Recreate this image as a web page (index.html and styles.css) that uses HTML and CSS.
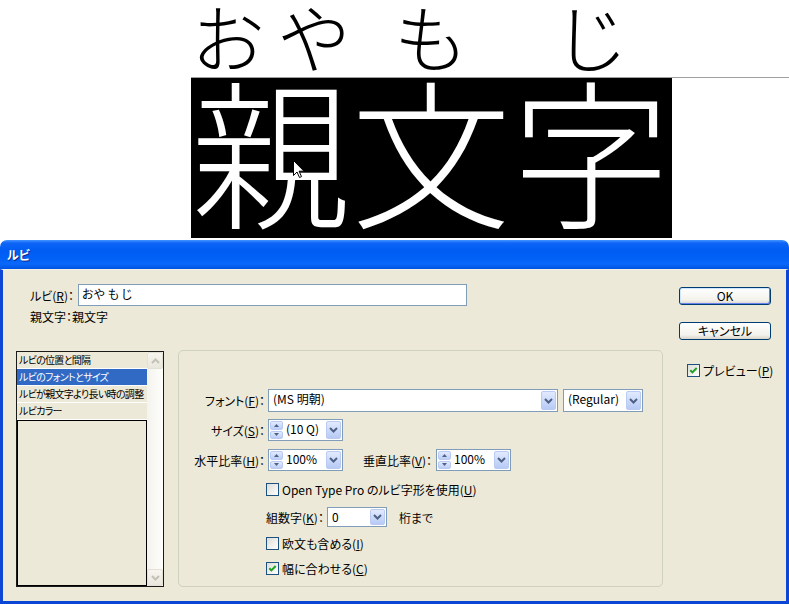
FILE: index.html
```html
<!DOCTYPE html>
<html lang="ja">
<head>
<meta charset="utf-8">
<title>ルビ</title>
<link rel="stylesheet" href="styles.css">
</head>
<body>
<div class="stage">
  <div class="ruby-line">
    <div class="rb-group pair"><span>お</span><span>や</span></div>
    <div class="rb-group"><span>も</span></div>
    <div class="rb-group"><span>じ</span></div>
  </div>
  <div class="rule">
    <div class="base-box">
      <span class="kanji">親</span><span class="kanji">文</span><span class="kanji">字</span>
      <svg class="cursor" width="12" height="19" viewBox="0 0 12 19"><path d="M0.5 0.5 L0.5 15.5 L4 12 L6.5 17.5 L8.5 16.6 L6.1 11.2 L11 11.2 Z" fill="#fff" stroke="#000" stroke-width="1"/></svg>
    </div>
  </div>
</div>

<div class="dialog">
  <div class="titlebar"><span class="title">ルビ</span></div>
  <div class="client">
    <div class="main">
      <div class="fields">
        <div class="field-row">
          <span class="lbl">ルビ(<u>R</u>)：</span>
          <div class="textbox">おや も じ</div>
        </div>
        <div class="info-row">親文字：親文字</div>
      </div>

      <div class="panels">
        <div class="listbox">
          <div class="list-items">
            <div class="item">ルビの位置と間隔</div>
            <div class="item selected">ルビのフォントとサイズ</div>
            <div class="item">ルビが親文字より長い時の調整</div>
            <div class="item">ルビカラー</div>
            <div class="list-empty"></div>
          </div>
          <div class="scrollbar">
            <div class="sb-btn"><svg width="9" height="6" viewBox="0 0 9 6"><path d="M1 5 L4.5 1.5 L8 5" fill="none" stroke="#C4C2B6" stroke-width="2"/></svg></div>
            <div class="sb-track"></div>
            <div class="sb-btn"><svg width="9" height="6" viewBox="0 0 9 6"><path d="M1 1 L4.5 4.5 L8 1" fill="none" stroke="#C4C2B6" stroke-width="2"/></svg></div>
          </div>
        </div>

        <div class="group">
          <div class="grow">
            <span class="glabel">フォント(<u>F</u>)：</span>
            <div class="combo font-combo">
              <span class="ctext">(MS 明朝)</span>
              <span class="dd"><svg width="9" height="6" viewBox="0 0 9 6"><path d="M1 1 L4.5 4.5 L8 1" fill="none" stroke="#4D6185" stroke-width="2"/></svg></span>
            </div>
            <div class="combo style-combo">
              <span class="ctext">(Regular)</span>
              <span class="dd"><svg width="9" height="6" viewBox="0 0 9 6"><path d="M1 1 L4.5 4.5 L8 1" fill="none" stroke="#4D6185" stroke-width="2"/></svg></span>
            </div>
          </div>

          <div class="grow row-size">
            <span class="glabel">サイズ(<u>S</u>)：</span>
            <div class="combo spin-combo">
              <span class="spin">
                <span class="sp"><svg width="5" height="3" viewBox="0 0 5 3"><path d="M0 3 L2.5 0 L5 3 Z" fill="#4D6185"/></svg></span>
                <span class="sp"><svg width="5" height="3" viewBox="0 0 5 3"><path d="M0 0 L2.5 3 L5 0 Z" fill="#4D6185"/></svg></span>
              </span>
              <span class="ctext">(10 Q)</span>
              <span class="dd"><svg width="9" height="6" viewBox="0 0 9 6"><path d="M1 1 L4.5 4.5 L8 1" fill="none" stroke="#4D6185" stroke-width="2"/></svg></span>
            </div>
          </div>

          <div class="grow row-ratio">
            <span class="glabel">水平比率(<u>H</u>)：</span>
            <div class="combo spin-combo">
              <span class="spin">
                <span class="sp"><svg width="5" height="3" viewBox="0 0 5 3"><path d="M0 3 L2.5 0 L5 3 Z" fill="#4D6185"/></svg></span>
                <span class="sp"><svg width="5" height="3" viewBox="0 0 5 3"><path d="M0 0 L2.5 3 L5 0 Z" fill="#4D6185"/></svg></span>
              </span>
              <span class="ctext">100%</span>
              <span class="dd"><svg width="9" height="6" viewBox="0 0 9 6"><path d="M1 1 L4.5 4.5 L8 1" fill="none" stroke="#4D6185" stroke-width="2"/></svg></span>
            </div>
            <span class="glabel2">垂直比率(<u>V</u>)：</span>
            <div class="combo spin-combo">
              <span class="spin">
                <span class="sp"><svg width="5" height="3" viewBox="0 0 5 3"><path d="M0 3 L2.5 0 L5 3 Z" fill="#4D6185"/></svg></span>
                <span class="sp"><svg width="5" height="3" viewBox="0 0 5 3"><path d="M0 0 L2.5 3 L5 0 Z" fill="#4D6185"/></svg></span>
              </span>
              <span class="ctext">100%</span>
              <span class="dd"><svg width="9" height="6" viewBox="0 0 9 6"><path d="M1 1 L4.5 4.5 L8 1" fill="none" stroke="#4D6185" stroke-width="2"/></svg></span>
            </div>
          </div>

          <div class="check row-ot"><span class="cb"></span>Open Type Pro のルビ字形を使用(<u>U</u>)</div>

          <div class="grow row-num">
            <span>組数字(<u>K</u>)：</span>
            <div class="combo num-combo">
              <span class="ctext">0</span>
              <span class="dd"><svg width="9" height="6" viewBox="0 0 9 6"><path d="M1 1 L4.5 4.5 L8 1" fill="none" stroke="#4D6185" stroke-width="2"/></svg></span>
            </div>
            <span class="suffix">桁まで</span>
          </div>

          <div class="check row-latin"><span class="cb"></span>欧文も含める(<u>I</u>)</div>
          <div class="check row-fit"><span class="cb"><svg width="11" height="11" viewBox="0 0 11 11"><path d="M2.3 5.2 L4.4 7.4 L8.7 3" fill="none" stroke="#21A121" stroke-width="2"/></svg></span>幅に合わせる(<u>C</u>)</div>
        </div>
      </div>
    </div>

    <div class="side">
      <button class="btn default">OK</button>
      <button class="btn cancel">キャンセル</button>
      <div class="check preview"><span class="cb"><svg width="11" height="11" viewBox="0 0 11 11"><path d="M2.3 5.2 L4.4 7.4 L8.7 3" fill="none" stroke="#21A121" stroke-width="2"/></svg></span>プレビュー(<u>P</u>)</div>
    </div>
  </div>
</div>
</body>
</html>
```

FILE: styles.css
```css
* { box-sizing: border-box; }
html, body { margin: 0; padding: 0; }
body {
  width: 789px;
  height: 604px;
  overflow: hidden;
  background: #fff;
  font-family: "Noto Sans CJK JP", sans-serif;
  color: #000;
}

/* ---------- top preview area ---------- */
.stage { height: 240px; }
.ruby-line {
  margin-left: 191px;
  width: 481px;
  height: 77px;
  display: flex;
  font-size: 74px;
  line-height: 70px;
  font-weight: 300;
}
.rb-group {
  width: 160px;
  display: flex;
  justify-content: center;
}
.rb-group.pair { gap: 12px; }

.rule {
  margin-left: 191px;
  border-top: 1px solid #a0a0a0;
  height: 161px;
}
.base-box {
  position: relative;
  width: 481px;
  height: 160px;
  background: #000;
  display: flex;
  align-items: flex-start;
}
.kanji {
  width: 160px;
  text-align: center;
  color: #fff;
  font-size: 160px;
  line-height: 138px;
  font-weight: 300;
}
.cursor {
  position: absolute;
  left: 102px;
  top: 82px;
}

/* ---------- dialog ---------- */
.dialog {
  height: 364px;
  display: flex;
  flex-direction: column;
  font-size: 12px;
  font-feature-settings: "palt";
}
.titlebar {
  height: 29px;
  border-radius: 7px 7px 0 0;
  background: linear-gradient(to bottom, #4595FF 0, #0E66F8 3px, #005CF2 10px, #0060F6 18px, #0A68FA 24px, #0052E0 29px);
  display: flex;
  align-items: center;
  padding-left: 7px;
}
.title {
  color: #fff;
  font-weight: bold;
  font-size: 12px;
  text-shadow: 1px 1px 0 #0A2C8C;
}
.client {
  flex: 1;
  display: flex;
  background: #ECE9D8;
  border: 3px solid #0B47D4;
  border-top: 1px solid #F4F2E8;
  padding: 14px 0 0 13px;
}
.main { width: 647px; }

.fields { padding-left: 14px; }
.field-row {
  display: flex;
  align-items: center;
  height: 22px;
}
.lbl { width: 48px; white-space: nowrap; }
.textbox {
  width: 389px;
  height: 22px;
  border: 1px solid #7F9DB9;
  background: #fff;
  padding-left: 3px;
  line-height: 17px;
}
.info-row {
  margin-top: 3px;
  height: 16px;
  line-height: 16px;
}

.panels {
  margin-top: 25px;
  display: flex;
  gap: 14px;
  align-items: flex-start;
}

/* list */
.listbox {
  margin-top: 1px;
  width: 148px;
  height: 236px;
  border: 1px solid #1a1a1a;
  display: flex;
  background: #fff;
}
.list-items {
  width: 130px;
  display: flex;
  flex-direction: column;
}
.item {
  height: 17px;
  border-bottom: 1px solid #fff;
  background: #ECE9D8;
  font-size: 10px;
  letter-spacing: -0.7px;
  line-height: 16px;
  padding-left: 2px;
  white-space: nowrap;
  overflow: hidden;
}
.item.selected { background: #316AC5; color: #fff; }
.list-empty {
  flex: 1;
  border: 1px solid #000;
  background: #ECE9D8;
}
.scrollbar {
  width: 16px;
  display: flex;
  flex-direction: column;
  background: linear-gradient(to right, #F4F3EE, #FEFEFB);
}
.sb-btn {
  height: 17px;
  border: 1px solid #E3E1D6;
  border-radius: 2px;
  background: linear-gradient(#F6F5EF, #E9E7DD);
  display: flex;
  align-items: center;
  justify-content: center;
}
.sb-track { flex: 1; }

/* group */
.group {
  width: 485px;
  height: 237px;
  border: 1px solid #D0D0BF;
  border-radius: 5px;
  padding-top: 38px;
}
.grow {
  display: flex;
  align-items: center;
}
.glabel {
  width: 89px;
  padding-right: 3px;
  text-align: right;
  white-space: nowrap;
}
.glabel2 {
  width: 93px;
  padding-right: 4px;
  text-align: right;
  white-space: nowrap;
}
.combo {
  display: flex;
  border: 1px solid #7F9DB9;
  background: #fff;
  padding: 1px;
}
.ctext {
  flex: 1;
  padding-left: 3px;
  line-height: 15px;
  white-space: nowrap;
}
.dd {
  width: 15px;
  border: 1px solid #B9CBF3;
  border-radius: 2px;
  background: linear-gradient(#E2EAFE, #B7CAF5);
  display: flex;
  align-items: center;
  justify-content: center;
}
.font-combo { width: 290px; height: 23px; }
.style-combo { width: 80px; height: 23px; margin-left: 5px; }
.spin-combo { width: 75px; height: 22px; }
.spin {
  width: 13px;
  display: flex;
  flex-direction: column;
  gap: 1px;
}
.sp {
  flex: 1;
  border: 1px solid #B9CBF3;
  border-radius: 2px;
  background: linear-gradient(#E2EAFE, #BCCDF6);
  display: flex;
  align-items: center;
  justify-content: center;
}
.row-size { margin-top: 7px; }
.row-ratio { margin-top: 8px; }

.check {
  display: flex;
  align-items: center;
  height: 16px;
  white-space: nowrap;
}
.cb {
  width: 13px;
  height: 13px;
  border: 1px solid #1C5180;
  background: linear-gradient(135deg, #DCDCD7, #FFFFFF);
  margin-right: 3px;
  display: flex;
  flex-shrink: 0;
}
.row-ot { margin: 10px 0 0 87px; }
.row-num { margin: 10px 0 0 87px; }
.num-combo { width: 60px; height: 20px; margin-left: 3px; }
.suffix { margin-left: 12px; }
.row-latin { margin: 8px 0 0 87px; }
.row-fit { margin: 9px 0 0 87px; }

/* side buttons */
.side {
  margin-left: 16px;
  width: 92px;
  display: flex;
  flex-direction: column;
  align-items: flex-start;
}
.btn {
  width: 92px;
  height: 18px;
  padding: 0;
  border: 1px solid #003C74;
  border-radius: 3px;
  background: linear-gradient(#FFFFFF, #F3F2EC 75%, #D9D4C8);
  font-family: "Noto Sans CJK JP", sans-serif;
  font-feature-settings: "palt";
  font-size: 12px;
  line-height: 14px;
  color: #000;
}
.btn.default {
  margin-top: 3px;
  box-shadow: inset 1px 1px 0 #CEE7FF, inset -1px -1px 0 #6982EE;
}
.btn.cancel { margin-top: 17px; }
.preview { margin-top: 22px; padding-left: 8px; }
u { text-decoration: underline; text-underline-offset: 1px; }
```
